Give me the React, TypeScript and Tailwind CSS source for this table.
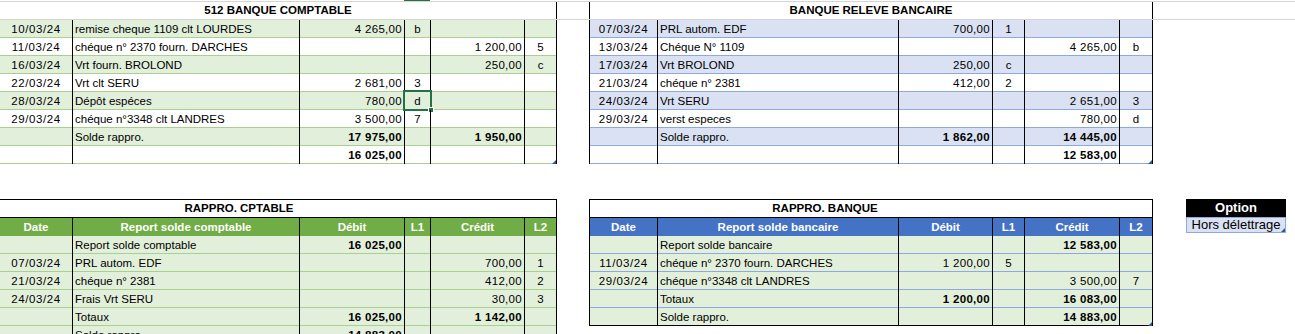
import React from 'react';

type Row = {
  date?: string;
  label?: string;
  debit?: string;
  l1?: string;
  credit?: string;
  l2?: string;
  bold?: boolean;
  sel?: boolean;
  corner?: boolean;
};

const LEFT_COLS = 'grid grid-cols-[73px_227px_105px_26px_94px_32px]';
const RIGHT_COLS = 'grid grid-cols-[68px_241px_94px_32px_95px_33px]';

const bankBook: Row[] = [
  { date: '10/03/24', label: 'remise cheque 1109 clt LOURDES', debit: '4 265,00', l1: 'b' },
  { date: '11/03/24', label: 'chéque n° 2370 fourn. DARCHES', credit: '1 200,00', l2: '5' },
  { date: '16/03/24', label: 'Vrt fourn. BROLOND', credit: '250,00', l2: 'c' },
  { date: '22/03/24', label: 'Vrt clt SERU', debit: '2 681,00', l1: '3' },
  { date: '28/03/24', label: 'Dépôt espéces', debit: '780,00', l1: 'd', sel: true },
  { date: '29/03/24', label: 'chéque n°3348 clt LANDRES', debit: '3 500,00', l1: '7' },
  { label: 'Solde rappro.', debit: '17 975,00', credit: '1 950,00', bold: true },
  { debit: '16 025,00', bold: true, corner: true },
];

const statement: Row[] = [
  { date: '07/03/24', label: 'PRL autom. EDF', debit: '700,00', l1: '1' },
  { date: '13/03/24', label: 'Chéque N° 1109', credit: '4 265,00', l2: 'b' },
  { date: '17/03/24', label: 'Vrt BROLOND', debit: '250,00', l1: 'c' },
  { date: '21/03/24', label: 'chéque n° 2381', debit: '412,00', l1: '2' },
  { date: '24/03/24', label: 'Vrt SERU', credit: '2 651,00', l2: '3' },
  { date: '29/03/24', label: 'verst especes', credit: '780,00', l2: 'd' },
  { label: 'Solde rappro.', debit: '1 862,00', credit: '14 445,00', bold: true },
  { credit: '12 583,00', bold: true, corner: true },
];

const rapproCpt: Row[] = [
  { label: 'Report solde comptable', debit: '16 025,00', bold: true },
  { date: '07/03/24', label: 'PRL autom. EDF', credit: '700,00', l2: '1' },
  { date: '21/03/24', label: 'chéque n° 2381', credit: '412,00', l2: '2' },
  { date: '24/03/24', label: 'Frais Vrt SERU', credit: '30,00', l2: '3' },
  { label: 'Totaux', debit: '16 025,00', credit: '1 142,00', bold: true },
  { label: 'Solde rappro.', debit: '14 883,00', bold: true },
];

const rapproBank: Row[] = [
  { label: 'Report solde bancaire', credit: '12 583,00', bold: true },
  { date: '11/03/24', label: 'chéque n° 2370 fourn. DARCHES', debit: '1 200,00', l1: '5' },
  { date: '29/03/24', label: 'chéque n°3348 clt LANDRES', credit: '3 500,00', l2: '7' },
  { label: 'Totaux', debit: '1 200,00', credit: '16 083,00', bold: true },
  { label: 'Solde rappro.', credit: '14 883,00', bold: true, corner: true },
];

function Corner() {
  return (
    <span className="absolute right-0 bottom-0 w-0 h-0 border-l-[4px] border-l-transparent border-b-[4px] border-b-[#2f5597]" />
  );
}

function DataRow({ r, cols, rowClass }: { r: Row; cols: string; rowClass: string }) {
  const amt = `border-r border-black flex items-center justify-end pr-[2px] pt-[1px] tracking-[0.3px] ${r.bold ? 'font-bold' : ''}`;
  return (
    <div className={`${cols} h-[18px] border-b ${rowClass}`}>
      <div className="border-r border-black flex items-center justify-center pt-[1px] tracking-[0.6px]">{r.date}</div>
      <div className="border-r border-black flex items-center pl-[2px] pt-[1px] whitespace-nowrap overflow-hidden">{r.label}</div>
      <div className={amt}>{r.debit}</div>
      <div className="relative border-r border-black flex items-center justify-center pt-[1px]">
        {r.l1}
        {r.sel && (
          <span className="absolute -left-[2px] -top-[2px] w-[29px] h-[21px] border-2 border-[#217346]">
            <span className="absolute -right-[4px] -bottom-[4px] w-[6px] h-[6px] bg-[#217346] border border-white" />
          </span>
        )}
      </div>
      <div className={amt}>{r.credit}</div>
      <div className="relative border-r border-black flex items-center justify-center pt-[1px]">
        {r.l2}
        {r.corner && <Corner />}
      </div>
    </div>
  );
}

function HeaderRow({ cols, bg, label }: { cols: string; bg: string; label: string }) {
  const heads = ['Date', label, 'Débit', 'L1', 'Crédit', 'L2'];
  return (
    <div className={`${cols} h-[18px] ${bg} text-white font-bold`}>
      {heads.map(h => (
        <div key={h} className="border-r border-black flex items-center justify-center pt-[1px]">{h}</div>
      ))}
    </div>
  );
}

export default function App() {
  return (
    <div className="w-[1295px] h-[334px] overflow-hidden bg-white text-black text-[11.5px] font-['Liberation_Sans',Arial,sans-serif]">
      {/* column header strip */}
      <div className="h-[1px] flex">
        <div className="ml-[404px] w-[26px] bg-[#217346]" />
      </div>

      {/* top titles */}
      <div className="flex h-[19px] border-t border-b border-[#d4d4d4]">
        <div className="w-[557px] border-r border-black flex items-center justify-center font-bold">512 BANQUE COMPTABLE</div>
        <div className="w-[32px]" />
        <div className="w-[564px] border-l border-r border-black flex items-center justify-center font-bold">BANQUE RELEVE BANCAIRE</div>
      </div>

      {/* top tables */}
      <div className="flex items-start">
        <div className="w-[557px]">
          {bankBook.map((r, i) => (
            <DataRow
              key={i}
              r={r}
              cols={LEFT_COLS}
              rowClass={i % 2 === 0 ? 'bg-[#e2efda] border-[#a9d08e]' : 'bg-white border-[#a9d08e]'}
            />
          ))}
        </div>
        <div className="w-[32px]" />
        <div className="w-[564px] border-l border-black">
          {statement.map((r, i) => (
            <DataRow
              key={i}
              r={r}
              cols={RIGHT_COLS}
              rowClass={i % 2 === 0 ? 'bg-[#d9e1f2] border-[#8ea9db]' : 'bg-white border-[#8ea9db]'}
            />
          ))}
        </div>
      </div>

      {/* reconciliation */}
      <div className="flex items-start mt-[35px]">
        <div className="w-[557px]">
          <div className="h-[19px] border-t border-b border-r border-black flex items-center justify-center pr-[78px] font-bold">
            RAPPRO. CPTABLE
          </div>
          <HeaderRow cols={LEFT_COLS} bg="bg-[#70ad47]" label="Report solde comptable" />
          {rapproCpt.map((r, i) => (
            <DataRow key={i} r={r} cols={LEFT_COLS} rowClass="bg-[#e2efda] border-[#a9d08e]" />
          ))}
        </div>
        <div className="w-[32px]" />
        <div className="w-[564px] border-l border-black">
          <div className="h-[19px] border-t border-b border-r border-black flex items-center justify-center pr-[92px] font-bold">
            RAPPRO. BANQUE
          </div>
          <HeaderRow cols={RIGHT_COLS} bg="bg-[#4472c4]" label="Report solde bancaire" />
          {rapproBank.map((r, i) => (
            <DataRow
              key={i}
              r={r}
              cols={RIGHT_COLS}
              rowClass={i === rapproBank.length - 1 ? 'bg-[#e2efda] border-black' : 'bg-[#e2efda] border-[#8ea9db]'}
            />
          ))}
        </div>
        <div className="w-[33px]" />
        <div className="w-[100px] text-[13px]">
          <div className="h-[18px] bg-black text-white font-bold flex items-center justify-center">Option</div>
          <div className="relative h-[16px] bg-[#d9e1f2] border border-[#8ea9db] flex items-center justify-center">
            Hors délettrage
            <Corner />
          </div>
        </div>
      </div>
    </div>
  );
}
